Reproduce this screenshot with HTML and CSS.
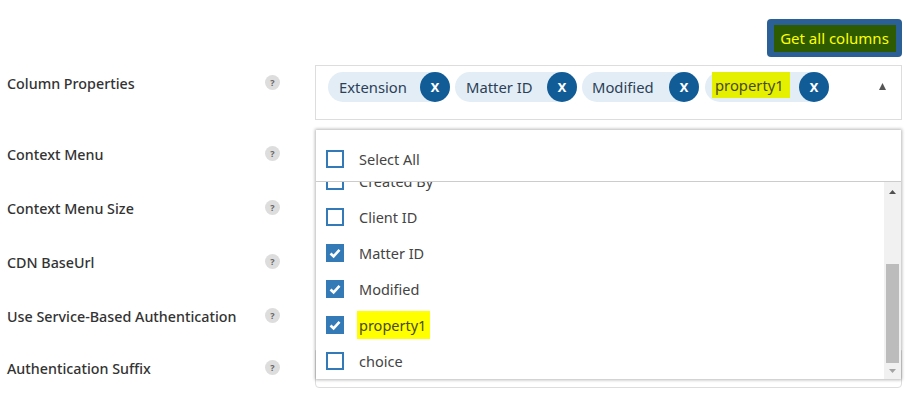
FILE: index.html
```html
<!DOCTYPE html>
<html lang="en">
<head>
<meta charset="utf-8">
<title>Column Properties</title>
<link rel="stylesheet" href="styles.css">
</head>
<body>
<div class="page">
  <div class="toolbar">
    <button class="btn" type="button"><span class="btn-mark">Get all columns</span></button>
  </div>

  <div class="row row-first">
    <label class="name">Column Properties</label>
    <span class="help">?</span>
    <div class="field field-tags">
      <span class="chip"><span class="chip-text">Extension</span><span class="chip-x">x</span></span>
      <span class="chip"><span class="chip-text">Matter ID</span><span class="chip-x">x</span></span>
      <span class="chip"><span class="chip-text">Modified</span><span class="chip-x">x</span></span>
      <span class="chip chip-marked"><span class="chip-text chip-mark">property1</span><span class="chip-x">x</span></span>
      <svg class="caret" width="7" height="7" viewBox="0 0 7 7"><path d="M3.5 0 L7 7 L0 7 Z"/></svg>
    </div>
  </div>
  <div class="row"><label class="name">Context Menu</label><span class="help">?</span></div>
  <div class="row"><label class="name">Context Menu Size</label><span class="help">?</span></div>
  <div class="row"><label class="name">CDN BaseUrl</label><span class="help">?</span></div>
  <div class="row row-short"><label class="name">Use Service-Based Authentication</label><span class="help">?</span></div>
  <div class="row row-last">
    <label class="name">Authentication Suffix</label><span class="help">?</span>
    <div class="field field-input"></div>
  </div>

  <div class="dropdown">
    <div class="dd-head">
      <span class="box"></span><span class="dd-label">Select All</span>
    </div>
    <div class="dd-body">
      <div class="dd-list">
        <div class="dd-items">
          <div class="item"><span class="box"></span><span class="dd-label">Created By</span></div>
          <div class="item"><span class="box"></span><span class="dd-label">Client ID</span></div>
          <div class="item"><span class="box box-on"><svg width="14" height="14" viewBox="0 0 14 14"><path d="M2.5 7.5 L5.6 10.3 L11.5 3.8" fill="none" stroke="#fff" stroke-width="2.6"/></svg></span><span class="dd-label">Matter ID</span></div>
          <div class="item"><span class="box box-on"><svg width="14" height="14" viewBox="0 0 14 14"><path d="M2.5 7.5 L5.6 10.3 L11.5 3.8" fill="none" stroke="#fff" stroke-width="2.6"/></svg></span><span class="dd-label">Modified</span></div>
          <div class="item"><span class="box box-on"><svg width="14" height="14" viewBox="0 0 14 14"><path d="M2.5 7.5 L5.6 10.3 L11.5 3.8" fill="none" stroke="#fff" stroke-width="2.6"/></svg></span><span class="dd-label dd-mark">property1</span></div>
          <div class="item"><span class="box"></span><span class="dd-label">choice</span></div>
        </div>
      </div>
      <div class="scrollbar">
        <svg class="sb-arrow" width="7" height="4" viewBox="0 0 7 4"><path d="M3.5 0 L7 4 L0 4 Z" fill="#505050"/></svg>
        <div class="sb-thumb"></div>
        <svg class="sb-arrow" width="7" height="4" viewBox="0 0 7 4"><path d="M0 0 L7 0 L3.5 4 Z" fill="#a3a3a3"/></svg>
      </div>
    </div>
  </div>
</div>
</body>
</html>
```

FILE: styles.css
```css
* { box-sizing: border-box; }
html, body { margin: 0; padding: 0; height: 100%; overflow: hidden; background: #fff; }
body { font-family: "Noto Sans", "Open Sans", "Liberation Sans", sans-serif; color: #333; }

.page { position: relative; width: 914px; height: 403px; overflow: hidden; }

.toolbar { display: flex; justify-content: flex-end; padding: 19px 12px 8px 0; height: 65px; }
.btn {
  width: 135px; height: 38px; padding: 0; border: 0; border-radius: 4px;
  background: #2a6095; display: flex; align-items: center; justify-content: center; font: inherit;
}
.btn-mark {
  width: 122px; height: 27px; background: #2f5b00; color: #ffff00;
  font-size: 15px; line-height: 27px; text-align: center; display: block;
}

.row { display: grid; grid-template-columns: 258px 15px 1fr; align-items: start; height: 54px; padding-left: 7px; }
.row-first { height: 71px; }
.row-short { height: 52px; }
.row-last { height: 38px; }
.name { font-size: 14.3px; font-weight: 500; line-height: 20px; color: #333; padding-top: 9px; white-space: nowrap; display: block; height: 29px; }
.help {
  width: 15px; height: 15px; margin-top: 10px; border-radius: 50%; background: #ddd; color: #666;
  font-size: 9px; font-weight: 700; line-height: 15px; text-align: center; display: block;
}

.field { margin-left: 35px; width: 587px; border: 1px solid #ddd; background: #fff; }
.field-tags { height: 55px; padding: 6px 0 0 12px; display: flex; align-items: flex-start; gap: 5px; position: relative; }
.field-input { height: 38px; border-radius: 0 0 4px 4px; }

.chip { display: flex; align-items: center; height: 30px; border-radius: 15px; background: #e3edf6; }
.chip-text { font-size: 14.8px; line-height: 30px; color: #2b3f57; padding: 0 14px 0 11px; white-space: nowrap; width: 92px; }
.chip:nth-child(3) .chip-text { width: 87px; padding-left: 10px; }
.chip-marked { margin-left: 1px; }
.chip-mark { background: #e5f000; height: 26px; line-height: 26px; align-self: flex-start; margin-left: 7px; width: 78px; padding: 0 0 0 3px; margin-right: 9px; color: #4a4a20; }
.chip-x {
  width: 30px; height: 30px; flex: none; border-radius: 50%; background: #115c96; color: #fff;
  font-size: 16px; font-weight: 600; line-height: 28px; text-align: center;
}
.caret { position: absolute; right: 15px; top: 17px; fill: #555; }

.dropdown {
  position: absolute; left: 316px; top: 130px; width: 585px; height: 249px; background: #fff;
  box-shadow: 0 0 3px 1px rgba(0,0,0,.28); display: flex; flex-direction: column;
}
.dd-head { height: 52px; flex: none; display: flex; align-items: center; padding: 6px 0 0 10px; border-bottom: 1px solid #ccc; }
.dd-body { flex: 1; min-height: 0; display: flex; }
.dd-list { flex: 1; overflow: hidden; }
.dd-items { margin-top: -19px; }
.item { height: 36px; display: flex; align-items: center; padding-left: 10px; }
.box { width: 18px; height: 18px; flex: none; border: 2px solid #337ab7; background: #fff; display: flex; align-items: center; justify-content: center; }
.box-on { background: #337ab7; }
.dd-label { margin-left: 15px; font-size: 14.5px; line-height: 20px; color: #444; white-space: nowrap; }
.dd-mark { background: #ffff00; margin-left: 13px; padding: 4px 2px; width: 73px; color: #4a4a20; }

.scrollbar { width: 17px; flex: none; background: #f1f1f1; display: flex; flex-direction: column; align-items: center; padding-top: 8px; }
.sb-arrow { flex: none; }
.sb-thumb { width: 13px; height: 99px; margin: 70px 0 6px; background: #bcbcbc; }
```
